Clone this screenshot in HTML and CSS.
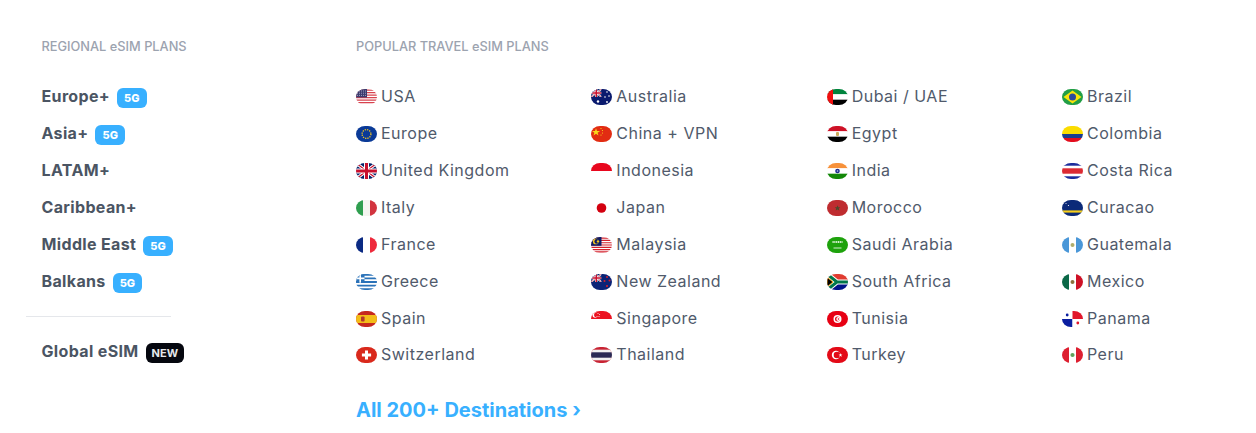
FILE: index.html
```html
<!DOCTYPE html>
<html lang="en">
<head>
    <meta charset="UTF-8">
    <meta name="viewport" content="width=device-width, initial-scale=1.0">
    <title>eSIM Plans Menu</title>
    <link rel="stylesheet" href="styles.css">
</head>
<body>
    <!-- shared union jack, used by UK, Australia and New Zealand -->
    <svg class="defs" width="0" height="0" aria-hidden="true">
        <defs>
            <g id="union">
                <rect width="21" height="16" fill="#012169"/>
                <path d="M0 0L21 16M21 0L0 16" stroke="#fff" stroke-width="3.2"/>
                <path d="M0 0L21 16M21 0L0 16" stroke="#c8102e" stroke-width="1.2"/>
                <path d="M10.5 0V16M0 8H21" stroke="#fff" stroke-width="5"/>
                <path d="M10.5 0V16M0 8H21" stroke="#c8102e" stroke-width="3"/>
            </g>
        </defs>
    </svg>

    <nav class="menu">
        <section class="regional">
            <h4 class="menu-title">REGIONAL eSIM PLANS</h4>
            <ul class="region-list">
                <li><a href="#">Europe+</a><span class="badge">5G</span></li>
                <li><a href="#">Asia+</a><span class="badge">5G</span></li>
                <li><a href="#">LATAM+</a></li>
                <li><a href="#">Caribbean+</a></li>
                <li><a href="#">Middle East</a><span class="badge">5G</span></li>
                <li><a href="#">Balkans</a><span class="badge">5G</span></li>
            </ul>
            <hr class="divider">
            <div class="region-global"><a href="#">Global eSIM</a><span class="badge badge-new">NEW</span></div>
        </section>

        <section class="popular">
            <h4 class="menu-title">POPULAR TRAVEL eSIM PLANS</h4>
            <ul class="country-list">
                <li><svg class="flag" viewBox="0 0 21 16"><rect width="21" height="16" fill="#fff"/><path d="M0 1.2H21M0 3.7H21M0 6.2H21M0 8.7H21M0 11.2H21M0 13.7H21" stroke="#d8434f" stroke-width="1.25"/><rect width="11" height="8.4" fill="#3c3b6e"/><path d="M1 2H10M1 4.2H10M1 6.4H10" stroke="#b9bbd6" stroke-width=".8" stroke-dasharray="1 1"/></svg>USA</li>
                <li><svg class="flag" viewBox="0 0 21 16"><rect width="21" height="16" fill="#0a3a97"/><circle cx="10.5" cy="8" r="4.4" fill="none" stroke="#f4c51f" stroke-width="1.3" stroke-dasharray="1.3 1"/></svg>Europe</li>
                <li><svg class="flag" viewBox="0 0 21 16"><use href="#union"/></svg>United Kingdom</li>
                <li><svg class="flag" viewBox="0 0 21 16"><rect width="7" height="16" fill="#2f9e4f"/><rect x="7" width="7" height="16" fill="#f4f5f0"/><rect x="14" width="7" height="16" fill="#d2343f"/></svg>Italy</li>
                <li><svg class="flag" viewBox="0 0 21 16"><rect width="7" height="16" fill="#0b2a83"/><rect x="7" width="7" height="16" fill="#fff"/><rect x="14" width="7" height="16" fill="#ee2a3c"/></svg>France</li>
                <li><svg class="flag" viewBox="0 0 21 16"><rect width="21" height="16" fill="#fff"/><path d="M0 .9H21M0 4.4H21M0 8H21M0 11.6H21M0 15.1H21" stroke="#2a72b8" stroke-width="1.8"/><rect width="8.5" height="8.8" fill="#2a72b8"/><path d="M4.2 0V8.8M0 4.4H8.5" stroke="#fff" stroke-width="1.6"/></svg>Greece</li>
                <li><svg class="flag" viewBox="0 0 21 16"><rect width="21" height="16" fill="#c6281d"/><rect y="4" width="21" height="8" fill="#f3bd18"/><rect x="5" y="5.6" width="3.6" height="4.8" rx="1" fill="#b3362a"/></svg>Spain</li>
                <li><svg class="flag" viewBox="0 0 21 16"><rect width="21" height="16" fill="#d9291c"/><path d="M10.5 3.4V12.6M5.9 8H15.1" stroke="#fff" stroke-width="3"/></svg>Switzerland</li>

                <li><svg class="flag" viewBox="0 0 21 16"><rect width="21" height="16" fill="#0a1a6e"/><svg width="10.5" height="8" viewBox="0 0 21 16"><use href="#union"/></svg><circle cx="7" cy="12.5" r="1.2" fill="#fff"/><circle cx="16" cy="3" r=".8" fill="#fff"/><circle cx="18" cy="7" r=".8" fill="#fff"/><circle cx="14" cy="8" r=".8" fill="#fff"/><circle cx="16" cy="13" r=".9" fill="#fff"/></svg>Australia</li>
                <li><svg class="flag" viewBox="0 0 21 16"><rect width="21" height="16" fill="#e22c12"/><path d="M5 2.2L6 5 9 5 6.6 6.7 7.5 9.6 5 7.8 2.5 9.6 3.4 6.7 1 5 4 5Z" fill="#f8d81c"/><circle cx="10" cy="2.5" r=".6" fill="#f8d81c"/><circle cx="11.5" cy="4.5" r=".6" fill="#f8d81c"/><circle cx="11.5" cy="7" r=".6" fill="#f8d81c"/><circle cx="10" cy="9" r=".6" fill="#f8d81c"/></svg>China + VPN</li>
                <li><svg class="flag" viewBox="0 0 21 16"><rect width="21" height="8" fill="#e8071e"/></svg>Indonesia</li>
                <li><svg class="flag" viewBox="0 0 21 16"><circle cx="10.5" cy="8" r="4.8" fill="#d3000f"/></svg>Japan</li>
                <li><svg class="flag" viewBox="0 0 21 16"><rect width="21" height="16" fill="#fff"/><path d="M0 1.1H21M0 3.4H21M0 5.7H21M0 8H21M0 10.3H21M0 12.6H21M0 14.9H21" stroke="#d3202c" stroke-width="1.15"/><rect width="10.5" height="8.8" fill="#0f1c66"/><circle cx="4.8" cy="4.4" r="2.9" fill="#f4c51f"/><circle cx="5.8" cy="4.4" r="2.4" fill="#0f1c66"/><circle cx="7" cy="4.4" r="1.2" fill="#f4c51f"/></svg>Malaysia</li>
                <li><svg class="flag" viewBox="0 0 21 16"><rect width="21" height="16" fill="#0b2377"/><svg width="10.5" height="8" viewBox="0 0 21 16"><use href="#union"/></svg><circle cx="16" cy="3" r="1" fill="#d3202c"/><circle cx="13.5" cy="7" r="1" fill="#d3202c"/><circle cx="18.5" cy="6.5" r="1" fill="#d3202c"/><circle cx="16" cy="12" r="1.1" fill="#d3202c"/></svg>New Zealand</li>
                <li><svg class="flag" viewBox="0 0 21 16"><rect width="21" height="8" fill="#ec1321"/><circle cx="4.2" cy="4" r="2.7" fill="#fff"/><circle cx="5.4" cy="4" r="2.4" fill="#ec1321"/><circle cx="7" cy="2.6" r=".5" fill="#fff"/><circle cx="8.6" cy="3.6" r=".5" fill="#fff"/><circle cx="8" cy="5.5" r=".5" fill="#fff"/><circle cx="6" cy="5.5" r=".5" fill="#fff"/></svg>Singapore</li>
                <li><svg class="flag" viewBox="0 0 21 16"><rect width="21" height="16" fill="#c82333"/><rect y="2.7" width="21" height="10.6" fill="#f1f1f1"/><rect y="5.3" width="21" height="5.4" fill="#2b2a55"/></svg>Thailand</li>

                <li><svg class="flag" viewBox="0 0 21 16"><rect width="21" height="5.33" fill="#00843d"/><rect y="5.33" width="21" height="5.34" fill="#fff"/><rect y="10.67" width="21" height="5.33" fill="#000"/><rect width="6" height="16" fill="#f00f0f"/></svg>Dubai / UAE</li>
                <li><svg class="flag" viewBox="0 0 21 16"><rect width="21" height="5.33" fill="#ce1126"/><rect y="5.33" width="21" height="5.34" fill="#fff"/><rect y="10.67" width="21" height="5.33" fill="#000"/><rect x="9" y="6" width="3" height="4" rx="1" fill="#c9a95a"/></svg>Egypt</li>
                <li><svg class="flag" viewBox="0 0 21 16"><rect width="21" height="5.33" fill="#f7913a"/><rect y="5.33" width="21" height="5.34" fill="#fff"/><rect y="10.67" width="21" height="5.33" fill="#138808"/><circle cx="10.5" cy="8" r="2.3" fill="#1c2c8c"/><circle cx="10.5" cy="8" r=".8" fill="#c7cbe8"/></svg>India</li>
                <li><svg class="flag" viewBox="0 0 21 16"><rect width="21" height="16" fill="#bf2c30"/><path d="M10.5 5.2L11.3 7.2 13.3 7.3 11.8 8.6 12.3 10.6 10.5 9.5 8.7 10.6 9.2 8.6 7.7 7.3 9.7 7.2Z" fill="#4d4a2a"/></svg>Morocco</li>
                <li><svg class="flag" viewBox="0 0 21 16"><rect width="21" height="16" fill="#1ea20c"/><path d="M5.5 5H15.5" stroke="#d6efd1" stroke-width="2.2" stroke-dasharray="1.2 .6"/><path d="M6.5 11H14.5" stroke="#e8f6e4" stroke-width=".9"/></svg>Saudi Arabia</li>
                <li><svg class="flag" viewBox="0 0 21 16"><rect width="21" height="8" fill="#e03c31"/><rect y="8" width="21" height="8" fill="#001489"/><path d="M0 0L10 8 0 16M10 8H21" fill="none" stroke="#fff" stroke-width="5"/><path d="M0 0L10 8 0 16M10 8H21" fill="none" stroke="#007749" stroke-width="3"/><path d="M0 3L6 8 0 13Z" fill="#000" stroke="#ffb81c"/></svg>South Africa</li>
                <li><svg class="flag" viewBox="0 0 21 16"><rect width="21" height="16" fill="#e70013"/><circle cx="10.5" cy="8" r="4" fill="#fff"/><circle cx="10.5" cy="8" r="2.5" fill="#e70013"/><circle cx="11.3" cy="8" r="2" fill="#fff"/><circle cx="11.5" cy="8" r=".8" fill="#e70013"/></svg>Tunisia</li>
                <li><svg class="flag" viewBox="0 0 21 16"><rect width="21" height="16" fill="#e30a17"/><circle cx="9" cy="8" r="4.2" fill="#fff"/><circle cx="10" cy="8" r="3.3" fill="#e30a17"/><path d="M13.5 6L14 7.4 15.5 7.4 14.3 8.3 14.8 9.8 13.5 8.9 12.2 9.8 12.7 8.3 11.5 7.4 13 7.4Z" fill="#fff"/></svg>Turkey</li>

                <li><svg class="flag" viewBox="0 0 21 16"><rect width="21" height="16" fill="#229e45"/><path d="M10.5 1.6L19.5 8 10.5 14.4 1.5 8Z" fill="#f8e509"/><circle cx="10.5" cy="8" r="3.5" fill="#2b4a9c"/></svg>Brazil</li>
                <li><svg class="flag" viewBox="0 0 21 16"><rect width="21" height="8" fill="#fbdc00"/><rect y="8" width="21" height="4" fill="#1a3c8f"/><rect y="12" width="21" height="4" fill="#e30c1c"/></svg>Colombia</li>
                <li><svg class="flag" viewBox="0 0 21 16"><rect width="21" height="16" fill="#fff"/><rect width="21" height="2.7" fill="#1c2c9c"/><rect y="13.3" width="21" height="2.7" fill="#1c2c9c"/><rect y="5.3" width="21" height="5.4" fill="#dc2a33"/></svg>Costa Rica</li>
                <li><svg class="flag" viewBox="0 0 21 16"><rect width="21" height="16" fill="#0c2a78"/><rect y="10.4" width="21" height="2.2" fill="#f7cf1c"/><circle cx="4" cy="3.5" r=".5" fill="#fff"/><circle cx="6.5" cy="5.5" r=".6" fill="#fff"/></svg>Curacao</li>
                <li><svg class="flag" viewBox="0 0 21 16"><rect width="7" height="16" fill="#4a97d8"/><rect x="7" width="7" height="16" fill="#fff"/><rect x="14" width="7" height="16" fill="#4a97d8"/><circle cx="10.5" cy="8" r="2" fill="#b0ad6c"/></svg>Guatemala</li>
                <li><svg class="flag" viewBox="0 0 21 16"><rect width="7" height="16" fill="#0a6847"/><rect x="7" width="7" height="16" fill="#fff"/><rect x="14" width="7" height="16" fill="#ce1126"/><circle cx="10.5" cy="8" r="2" fill="#8b6f3c"/></svg>Mexico</li>
                <li><svg class="flag" viewBox="0 0 21 16"><rect width="10.5" height="8" fill="#fff"/><rect x="10.5" width="10.5" height="8" fill="#e2172b"/><rect y="8" width="10.5" height="8" fill="#0a1ea0"/><rect x="10.5" y="8" width="10.5" height="8" fill="#fff"/><circle cx="5.2" cy="4" r="1.4" fill="#0a1ea0"/><circle cx="15.8" cy="12" r="1.4" fill="#e2172b"/></svg>Panama</li>
                <li><svg class="flag" viewBox="0 0 21 16"><rect width="7" height="16" fill="#dd1f30"/><rect x="7" width="7" height="16" fill="#fff"/><rect x="14" width="7" height="16" fill="#dd1f30"/><circle cx="10.5" cy="8" r="2.1" fill="#5fa35c"/></svg>Peru</li>
            </ul>
            <a class="all-link" href="#">All 200+ Destinations ›</a>
        </section>
    </nav>
</body>
</html>
```

FILE: styles.css
```css
body {
    margin: 0;
    background-color: #fff;
    font-family: "Inter", "Liberation Sans", sans-serif;
    color: #4b5563;
}

.defs {
    position: absolute;
}

.menu {
    display: flex;
    padding: 38px 0 0 26px;
}

.menu-title {
    margin: 0;
    font-size: 12.8px;
    line-height: 18px;
    font-weight: 500;
    color: #9ca3af;
}

.regional {
    flex: none;
    width: 330px;
}

.regional .menu-title {
    padding-left: 15.5px;
}

.region-list,
.country-list {
    list-style: none;
    margin: 0;
    padding: 0;
}

.region-list {
    margin-top: 22px;
}

.region-list li,
.region-global {
    display: flex;
    align-items: center;
    height: 36.86px;
    padding-left: 15.5px;
    font-size: 16px;
    font-weight: 700;
}

.region-list a,
.region-global a {
    color: #4b5563;
    text-decoration: none;
    letter-spacing: 0.35px;
}

.badge {
    margin: 4px 0 0 7px;
    padding: 0 7px;
    height: 20px;
    line-height: 20px;
    border-radius: 6px;
    background-color: #38b0ff;
    color: #fff;
    font-size: 11px;
    font-weight: 800;
}

.badge-new {
    background-color: #05070f;
    color: #e5e7eb;
    padding: 0 6px;
    font-weight: 700;
}

.divider {
    width: 145px;
    margin: 17px 0 15px;
    border: 0;
    border-top: 1px solid #e5e7eb;
}

.country-list {
    display: grid;
    grid-auto-flow: column;
    grid-template-rows: repeat(8, 36.86px);
    grid-template-columns: repeat(4, 235.33px);
    margin-top: 22px;
}

.country-list li {
    display: flex;
    align-items: center;
    gap: 4px;
    font-size: 16px;
    letter-spacing: 0.5px;
    color: #505a6b;
}

.flag {
    flex: none;
    width: 21px;
    height: 16px;
    margin-top: 2px;
    border-radius: 9px / 8px;
}

.all-link {
    display: block;
    margin-top: 22px;
    font-size: 20px;
    line-height: 30px;
    font-weight: 700;
    color: #38b0ff;
    text-decoration: none;
}
```
